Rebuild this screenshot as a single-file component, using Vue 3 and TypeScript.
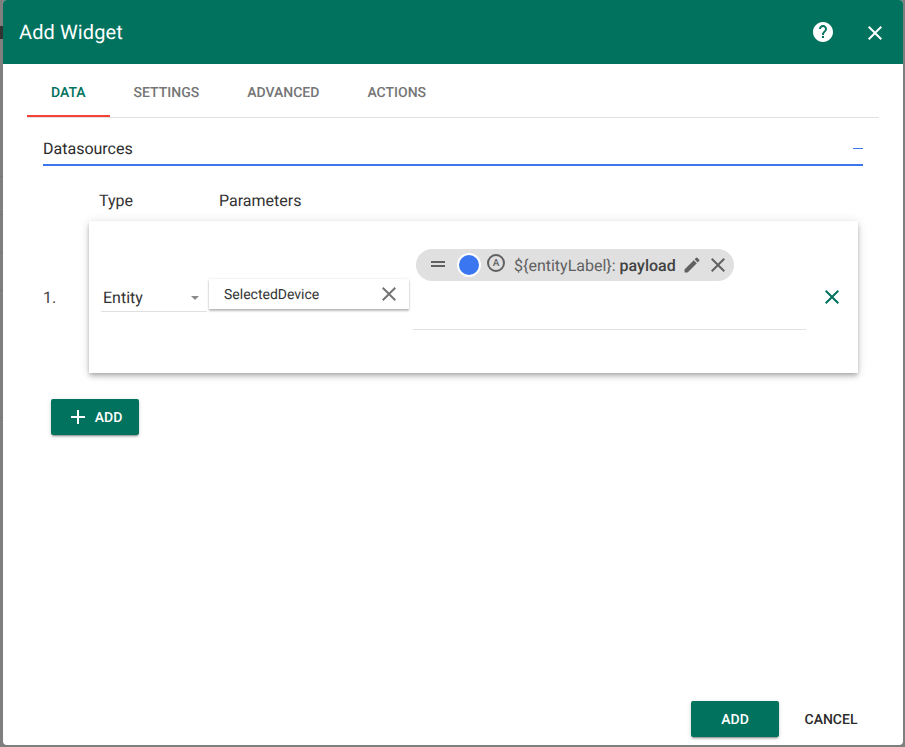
<script setup lang="ts">
import { ref } from 'vue'

const tabs = ['Data', 'Settings', 'Advanced', 'Actions']
const activeTab = ref('Data')
const entityAlias = ref('SelectedDevice')
</script>

<template>
  <div class="backdrop">
    <div class="page-behind">
      <i class="dark-mark"></i>
      <i class="rule" v-for="n in 5" :key="n"></i>
    </div>
    <div class="dialog">
      <header class="toolbar">
        <h2 class="title">Add Widget</h2>
        <span class="spacer"></span>
        <button class="icon-btn help">
          <svg viewBox="0 0 24 24" width="24" height="24">
            <path fill="#fff" d="M11 18h2v-2h-2v2zm1-16C6.48 2 2 6.48 2 12s4.48 10 10 10 10-4.48 10-10S17.52 2 12 2zM15.07 11.25l-.9.92C13.45 12.9 13 13.5 13 15h-2v-.5c0-1.1.45-2.1 1.17-2.83l1.24-1.26c.37-.36.59-.86.59-1.41 0-1.1-.9-2-2-2s-2 .9-2 2H8c0-2.21 1.79-4 4-4s4 1.79 4 4c0 .88-.36 1.68-.93 2.25z" fill-rule="evenodd"/>
          </svg>
        </button>
        <button class="icon-btn close">
          <svg viewBox="0 0 24 24" width="24" height="24">
            <path fill="#fff" d="M19 6.41 17.59 5 12 10.59 6.41 5 5 6.41 10.59 12 5 17.59 6.41 19 12 13.41 17.59 19 19 17.59 13.41 12z"/>
          </svg>
        </button>
      </header>

      <div class="body">
        <nav class="tabs">
          <div
            v-for="tab in tabs"
            :key="tab"
            class="tab"
            :class="{ active: tab === activeTab }"
          >{{ tab }}</div>
        </nav>

        <section class="datasources">
          <div class="panel-head">
            <span>Datasources</span>
            <i class="collapse"></i>
          </div>

          <div class="columns">
            <span class="col-type">Type</span>
            <span>Parameters</span>
          </div>

          <div class="row">
            <span class="index">1.</span>
            <div class="card">
              <div class="select">
                <span>Entity</span>
                <i class="caret"></i>
              </div>
              <div class="alias">
                <span>{{ entityAlias }}</span>
                <svg viewBox="0 0 24 24" width="24" height="24">
                  <path fill="#757575" d="M19 6.41 17.59 5 12 10.59 6.41 5 5 6.41 10.59 12 5 17.59 6.41 19 12 13.41 17.59 19 19 17.59 13.41 12z"/>
                </svg>
              </div>
              <div class="keys">
                <div class="chip">
                  <svg class="drag" viewBox="0 0 24 24" width="24" height="24">
                    <path fill="#616161" d="M5 9h14v2H5zM5 13h14v2H5z"/>
                  </svg>
                  <i class="dot"></i>
                  <span class="key-type">A</span>
                  <span class="chip-label">${entityLabel}: <b>payload</b></span>
                  <svg class="edit" viewBox="0 0 24 24" width="20" height="20">
                    <path fill="#616161" d="M3 17.25V21h3.75L17.81 9.94l-3.75-3.75L3 17.25zM20.71 7.04a1 1 0 0 0 0-1.41l-2.34-2.34a1 1 0 0 0-1.41 0l-1.83 1.83 3.75 3.75 1.83-1.83z"/>
                  </svg>
                  <svg class="remove" viewBox="0 0 24 24" width="24" height="24">
                    <path fill="#616161" d="M19 6.41 17.59 5 12 10.59 6.41 5 5 6.41 10.59 12 5 17.59 6.41 19 12 13.41 17.59 19 19 17.59 13.41 12z"/>
                  </svg>
                </div>
                <div class="keys-line"></div>
              </div>
              <button class="row-remove">
                <svg viewBox="0 0 24 24" width="24" height="24">
                  <path fill="#00725e" d="M19 6.41 17.59 5 12 10.59 6.41 5 5 6.41 10.59 12 5 17.59 6.41 19 12 13.41 17.59 19 19 17.59 13.41 12z"/>
                </svg>
              </button>
            </div>
          </div>

          <button class="btn add-source">
            <svg viewBox="0 0 24 24" width="24" height="24">
              <path fill="#fff" d="M19 13h-6v6h-2v-6H5v-2h6V5h2v6h6z"/>
            </svg>
            <span>Add</span>
          </button>
        </section>
      </div>

      <footer class="actions">
        <button class="btn submit">Add</button>
        <button class="cancel">Cancel</button>
      </footer>
    </div>
  </div>
</template>

<style>
html,
body {
  margin: 0;
  background: #7f7f7f;
}
</style>

<style scoped>
.backdrop {
  position: relative;
  width: 905px;
  height: 747px;
  overflow: hidden;
  background: #7f7f7f;
  font-family: Roboto, "Liberation Sans", sans-serif;
  color: #2b2b2b;
  text-rendering: geometricPrecision;
}
.page-behind {
  position: absolute;
  left: 0;
  top: 0;
  width: 3px;
  height: 747px;
}
.dark-mark {
  position: absolute;
  left: 0;
  top: 26px;
  width: 3px;
  height: 13px;
  background: #333;
}
.rule {
  position: absolute;
  left: 0;
  width: 3px;
  height: 1px;
  background: #757575;
}
.rule:nth-of-type(2) { top: 176px; }
.rule:nth-of-type(3) { top: 214px; }
.rule:nth-of-type(4) { top: 252px; }
.rule:nth-of-type(5) { top: 290px; }
.rule:nth-of-type(6) { top: 417px; }
.dialog {
  position: absolute;
  left: 3px;
  top: 0;
  width: 900px;
  height: 745px;
  display: flex;
  flex-direction: column;
  background: #fff;
  border-radius: 4px;
  overflow: hidden;
}
.toolbar {
  display: flex;
  align-items: center;
  height: 64px;
  flex: none;
  padding: 0 16px;
  background: #00725e;
  color: #fff;
}
.title {
  margin: 0;
  font-size: 20px;
  font-weight: 400;
  letter-spacing: 0.005em;
}
.spacer {
  flex: 1;
}
.icon-btn {
  display: flex;
  padding: 0;
  border: 0;
  background: none;
}
.help {
  margin-right: 28px;
  margin-top: -1px;
}
.close {
  margin-top: 1px;
}
.body {
  flex: 1;
  padding: 0 24px;
}
.tabs {
  display: flex;
  height: 53px;
  box-sizing: content-box;
  border-bottom: 1px solid #e0e0e0;
}
.tab {
  display: flex;
  align-items: center;
  box-sizing: border-box;
  height: 53px;
  padding: 6px 24px 0;
  font-size: 14px;
  font-weight: 500;
  text-transform: uppercase;
  color: #757575;
  border-bottom: 2px solid transparent;
}
.tab.active {
  color: #00725e;
  border-bottom-color: #f44336;
}
.datasources {
  padding: 0 16px;
}
.panel-head {
  display: flex;
  align-items: center;
  justify-content: space-between;
  height: 32px;
  padding-top: 14px;
  font-size: 16px;
  border-bottom: 2px solid #3a76f0;
}
.collapse {
  width: 10px;
  height: 1px;
  background: #3a76f0;
  margin-top: 1px;
}
.columns {
  display: flex;
  height: 41px;
  padding-top: 14px;
  align-items: center;
  padding-left: 56px;
  font-size: 16px;
  color: #333;
}
.col-type {
  width: 120px;
}
.row {
  display: flex;
  align-items: center;
}
.index {
  width: 46px;
  font-size: 16px;
  color: #424242;
}
.card {
  display: flex;
  align-items: flex-start;
  width: 769px;
  height: 152px;
  box-sizing: border-box;
  background: #fff;
  box-shadow: 0 2px 4px -1px rgba(0, 0, 0, .2), 0 4px 5px rgba(0, 0, 0, .14), 0 1px 10px rgba(0, 0, 0, .12);
}
.select {
  display: flex;
  align-items: center;
  justify-content: space-between;
  box-sizing: border-box;
  width: 106px;
  height: 37px;
  margin: 54px 0 0 12px;
  padding: 9px 8px 0 2px;
  font-size: 16px;
  border-bottom: 1px solid #e0e0e0;
  color: #333;
}
.caret {
  width: 0;
  height: 0;
  border-left: 4px solid transparent;
  border-right: 4px solid transparent;
  border-top: 4px solid #8a8a8a;
}
.alias {
  display: flex;
  align-items: center;
  justify-content: space-between;
  box-sizing: border-box;
  width: 200px;
  height: 30px;
  margin: 58px 0 0 2px;
  padding: 2px 8px 0 15px;
  font-size: 14px;
  color: #333;
  background: #fff;
  box-shadow: 0 2px 2px rgba(0, 0, 0, .25), 0 0 2px rgba(0, 0, 0, .12);
}
.alias svg {
  margin-top: -2px;
}
.keys {
  width: 393px;
  margin: 28px 0 0 4px;
}
.chip {
  display: flex;
  align-items: center;
  width: 318px;
  height: 32px;
  margin-left: 3px;
  border-radius: 16px;
  background: #e0e0e0;
  font-size: 16px;
  color: #616161;
  box-sizing: border-box;
  padding-left: 10px;
}
.drag {
  width: 24px;
  margin-top: -3px;
}
.dot {
  box-sizing: border-box;
  width: 24px;
  height: 24px;
  margin-left: 7px;
  border-radius: 50%;
  background: #3a76f0;
  border: 2px solid #fff;
}
.key-type {
  display: flex;
  align-items: center;
  justify-content: center;
  box-sizing: border-box;
  width: 18px;
  height: 18px;
  margin: -4px 0 0 6px;
  border: 2px solid #616161;
  border-radius: 50%;
  font-size: 10px;
  font-weight: 500;
  color: #616161;
}
.chip-label {
  margin-left: 9px;
  white-space: nowrap;
}
.chip-label b {
  font-weight: 500;
  color: #424242;
}
.edit {
  margin-left: 6px;
}
.remove {
  margin-left: 4px;
}
.keys-line {
  height: 1px;
  margin-top: 48px;
  background: #e0e0e0;
}
.row-remove {
  display: flex;
  padding: 0;
  border: 0;
  background: none;
  margin: 64px 0 0 14px;
}
.btn {
  display: flex;
  align-items: center;
  justify-content: center;
  box-sizing: border-box;
  height: 36px;
  width: 88px;
  padding: 2px 0 0;
  border: 0;
  border-radius: 2px;
  background: #00725e;
  color: #fff;
  font-family: inherit;
  font-size: 14px;
  font-weight: 500;
  text-transform: uppercase;
  text-rendering: geometricPrecision;
  box-shadow: 0 3px 1px -2px rgba(0, 0, 0, .2), 0 2px 2px rgba(0, 0, 0, .14), 0 1px 5px rgba(0, 0, 0, .12);
}
.add-source {
  margin: 26px 0 0 8px;
  gap: 5px;
  padding-right: 2px;
}
.add-source svg {
  margin-top: -2px;
}
.actions {
  display: flex;
  align-items: center;
  flex: none;
  justify-content: flex-end;
  height: 36px;
  padding: 0 28px 8px 0;
}
.cancel {
  width: 88px;
  height: 36px;
  margin-left: 8px;
  padding: 2px 0 0;
  border: 0;
  background: none;
  font-family: inherit;
  font-size: 14px;
  font-weight: 500;
  text-transform: uppercase;
  text-rendering: geometricPrecision;
  color: #2b2b2b;
}
</style>
